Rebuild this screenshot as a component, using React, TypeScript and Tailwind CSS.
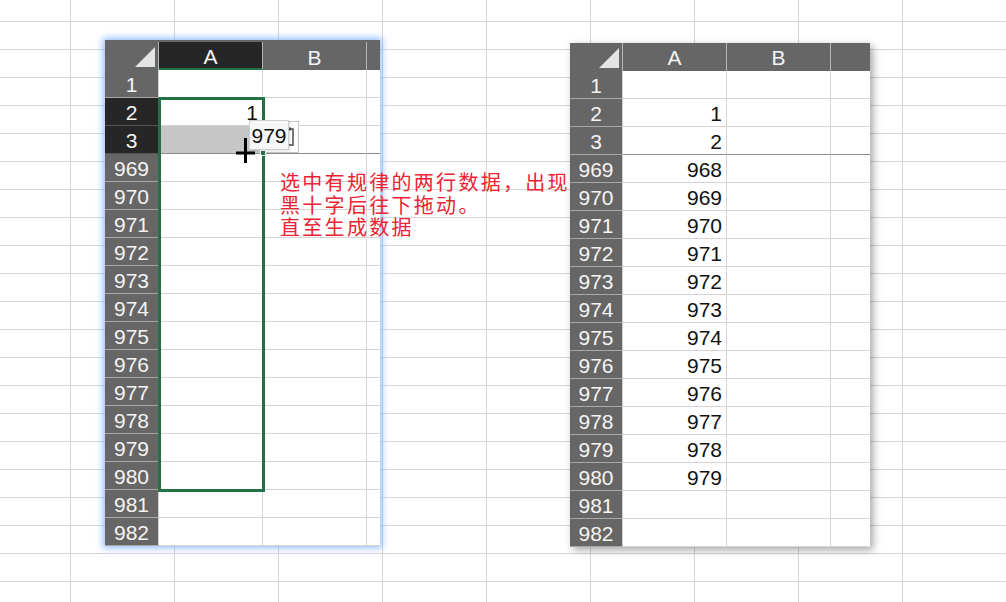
import React from "react";

type Row = { label: string; value?: string; dark?: boolean; fill?: boolean; freeze?: boolean };

function Corner({ w }: { w: number }) {
  return (
    <div
      className="flex h-full items-end justify-end border-r border-[#b5b5b5] pb-[3px] pr-[3px]"
      style={{ width: w }}
    >
      <svg width="20" height="20" viewBox="0 0 20 20">
        <polygon points="20,0 20,20 0,20" fill="#e4e4e4" />
      </svg>
    </div>
  );
}

function Sheet({
  rows,
  hdrW,
  restW,
  leftStyle,
}: {
  rows: Row[];
  hdrW: number;
  restW: number;
  leftStyle: boolean;
}) {
  return (
    <div className="flex flex-col bg-white">
      {leftStyle ? (
        <div className="flex h-[30px] bg-[#666666] pt-[2px]">
          <Corner w={hdrW} />
          <div className="flex h-full w-[104px] items-center justify-center border-b-2 border-r border-b-[#217346] border-r-[#b5b5b5] bg-[#262626] pt-[3px] text-[21px] text-[#f4f4f4]">
            A
          </div>
          <div className="flex h-full w-[104px] items-center justify-center border-r border-[#b5b5b5] pt-[3px] text-[21px] text-[#f4f4f4]">
            B
          </div>
          <div className="h-full" style={{ width: restW }} />
        </div>
      ) : (
        <div className="flex h-[28px] bg-[#666666]">
          <Corner w={hdrW} />
          <div className="flex h-full w-[104px] items-center justify-center border-r border-[#b5b5b5] pt-[2px] text-[21px] text-[#f4f4f4]">
            A
          </div>
          <div className="flex h-full w-[104px] items-center justify-center border-r border-[#b5b5b5] pt-[2px] text-[21px] text-[#f4f4f4]">
            B
          </div>
          <div className="h-full" style={{ width: restW }} />
        </div>
      )}
      {rows.map((r) => (
        <div key={r.label} className="flex h-[28px]">
          <div
            className={
              "flex h-full items-center justify-center border-b border-r border-r-[#cfcfcf] pt-[2px] text-[21px] text-[#f4f4f4] " +
              (r.dark ? "bg-[#262626] border-b-[#555555]" : "bg-[#666666] border-b-[#a8a8a8]")
            }
            style={{ width: hdrW }}
          >
            {r.label}
          </div>
          <div
            className={
              "flex h-full w-[104px] items-center justify-end border-b border-r border-r-[#d4d4d4] pr-[4px] pt-[2px] text-[21px] text-[#111111] " +
              (r.freeze ? "border-b-[#8a8a8a] " : "border-b-[#d4d4d4] ") +
              (r.fill ? "bg-[#c6c6c6]" : "bg-white")
            }
          >
            {r.value ?? ""}
          </div>
          <div
            className={
              "h-full w-[104px] border-b border-r border-r-[#d4d4d4] " +
              (r.freeze ? "border-b-[#8a8a8a]" : "border-b-[#d4d4d4]")
            }
          />
          <div
            className={"h-full border-b " + (r.freeze ? "border-b-[#8a8a8a]" : "border-b-[#d4d4d4]")}
            style={{ width: restW }}
          />
        </div>
      ))}
    </div>
  );
}

export default function App() {
  const nums = Array.from({ length: 14 }, (_, i) => 969 + i);
  const leftRows: Row[] = [
    { label: "1" },
    { label: "2", value: "1", dark: true },
    { label: "3", dark: true, fill: true, freeze: true },
    ...nums.map((n) => ({ label: String(n) })),
  ];
  const rightRows: Row[] = [
    { label: "1" },
    { label: "2", value: "1" },
    { label: "3", value: "2", freeze: true },
    ...nums.map((n) => ({ label: String(n), value: n <= 980 ? String(n - 1) : undefined })),
  ];

  return (
    <div className="relative h-[602px] w-[1006px] overflow-hidden bg-white [background-image:linear-gradient(to_right,#d6d6d6_1px,transparent_1px),linear-gradient(to_bottom,#d6d6d6_1px,transparent_1px)] [background-position:70px_21px] [background-size:104px_28px] [font-family:'Liberation_Sans','Noto_Sans_CJK_SC',sans-serif]">
      <div className="flex items-start gap-[190px] pl-[105px] pt-[40px]">
        {/* left sheet, selected window */}
        <div className="relative shadow-[0_0_7px_2px_rgba(110,165,250,0.75)]">
          <Sheet rows={leftRows} hdrW={54} restW={13} leftStyle />
          {/* drag selection outline */}
          <div className="absolute left-[53px] top-[57px] h-[395px] w-[107px] border-[3px] border-[#217346]" />
          {/* autofill options button */}
          <div className="absolute left-[157px] top-[81px] flex h-[32px] w-[37px] items-center justify-end border border-[#c4c4c4] bg-white pr-[3px]">
            <svg width="12" height="20" viewBox="0 0 12 20">
              <rect x="1" y="2" width="9" height="16" fill="none" stroke="#555" strokeWidth="1.6" />
              <rect x="3" y="0.5" width="5" height="3" fill="#555" />
            </svg>
          </div>
          {/* fill handle */}
          <div className="absolute left-[155px] top-[110px] h-[6px] w-[6px] border border-white bg-[#217346]" />
          {/* tooltip */}
          <div className="absolute left-[144px] top-[80px] flex h-[30px] w-[40px] items-center justify-center border border-[#cfcfcf] bg-[#f7f7f7] pt-[2px] text-[21px] text-[#111111] shadow-[1px_1px_2px_rgba(0,0,0,0.15)]">
            979
          </div>
          {/* crosshair cursor */}
          <svg className="absolute left-[131px] top-[98px]" width="20" height="26" viewBox="0 0 20 26">
            <line x1="9.5" y1="0" x2="9.5" y2="25" stroke="#000" strokeWidth="3" />
            <line x1="0" y1="15" x2="19" y2="15" stroke="#000" strokeWidth="3" />
          </svg>
        </div>
        {/* right sheet */}
        <div className="mt-[3px] shadow-[3px_3px_8px_rgba(0,0,0,0.35)]">
          <Sheet rows={rightRows} hdrW={53} restW={39} leftStyle={false} />
        </div>
      </div>
      {/* annotation */}
      <div className="absolute left-[280px] top-[171px] text-[20px] leading-[22.5px] tracking-[2.3px] text-[#ee2233] [font-family:'Noto_Sans_CJK_SC',sans-serif]">
        <div>选中有规律的两行数据，出现</div>
        <div>黑十字后往下拖动。</div>
        <div>直至生成数据</div>
      </div>
    </div>
  );
}
